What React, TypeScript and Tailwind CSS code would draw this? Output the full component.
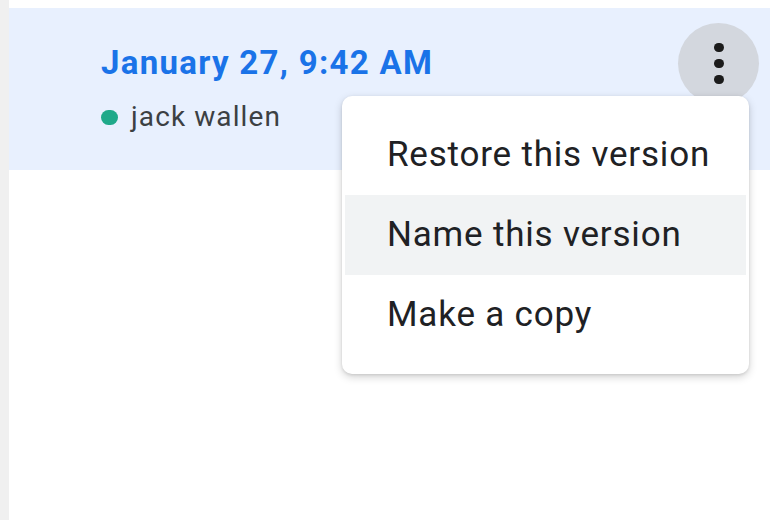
import React from "react";

export default function App() {
  return (
    <div className="relative flex h-[520px] w-[770px] overflow-hidden bg-white" style={{ fontFamily: "Roboto, 'Liberation Sans', sans-serif" }}>
      <div className="h-full w-[9px] bg-[#f0f0f0]" />
      <div className="flex flex-1 flex-col">
        <div className="h-[8px] bg-white" />
        <div className="relative flex h-[162px] items-start justify-between bg-[#e8f0fe] pl-[92px] pr-[11px]">
          <div className="flex flex-col pt-[35px]">
            <div className="text-[33px] font-bold leading-[40px] tracking-[1.3px] text-[#1a73e8]">January 27, 9:42 AM</div>
            <div className="mt-[18px] flex h-[32px] items-center gap-[13px]">
              <span className="h-[15px] w-[17px] rounded-full bg-[#1fa98a]" />
              <span className="text-[28px] leading-[32px] tracking-[1.1px] text-[#3c4043]">jack wallen</span>
            </div>
          </div>
          <div className="mt-[15px] flex h-[81px] w-[81px] flex-col items-center justify-center gap-[7px] rounded-full bg-[#d3d7de]">
            <span className="h-[9px] w-[10px] rounded-full bg-[#1b1b1b]" />
            <span className="h-[9px] w-[10px] rounded-full bg-[#1b1b1b]" />
            <span className="h-[9px] w-[10px] rounded-full bg-[#1b1b1b]" />
          </div>
        </div>
        <div className="flex-1 bg-white" />
      </div>
      <div className="absolute left-[342px] top-[96px] w-[407px] rounded-[10px] bg-white py-[19px] shadow-[0_3px_8px_rgba(0,0,0,0.18),0_1px_3px_rgba(0,0,0,0.1)]">
        <div className="flex h-[80px] items-center pl-[45px] text-[35px] leading-[40px] tracking-[0.8px] text-[#202124]">Restore this version</div>
        <div className="mx-[3px] flex h-[80px] items-center bg-[#f1f3f4] pl-[42px] text-[35px] leading-[40px] tracking-[0.8px] text-[#202124]">Name this version</div>
        <div className="flex h-[80px] items-center pl-[45px] text-[35px] leading-[40px] tracking-[0.8px] text-[#202124]">Make a copy</div>
      </div>
    </div>
  );
}
